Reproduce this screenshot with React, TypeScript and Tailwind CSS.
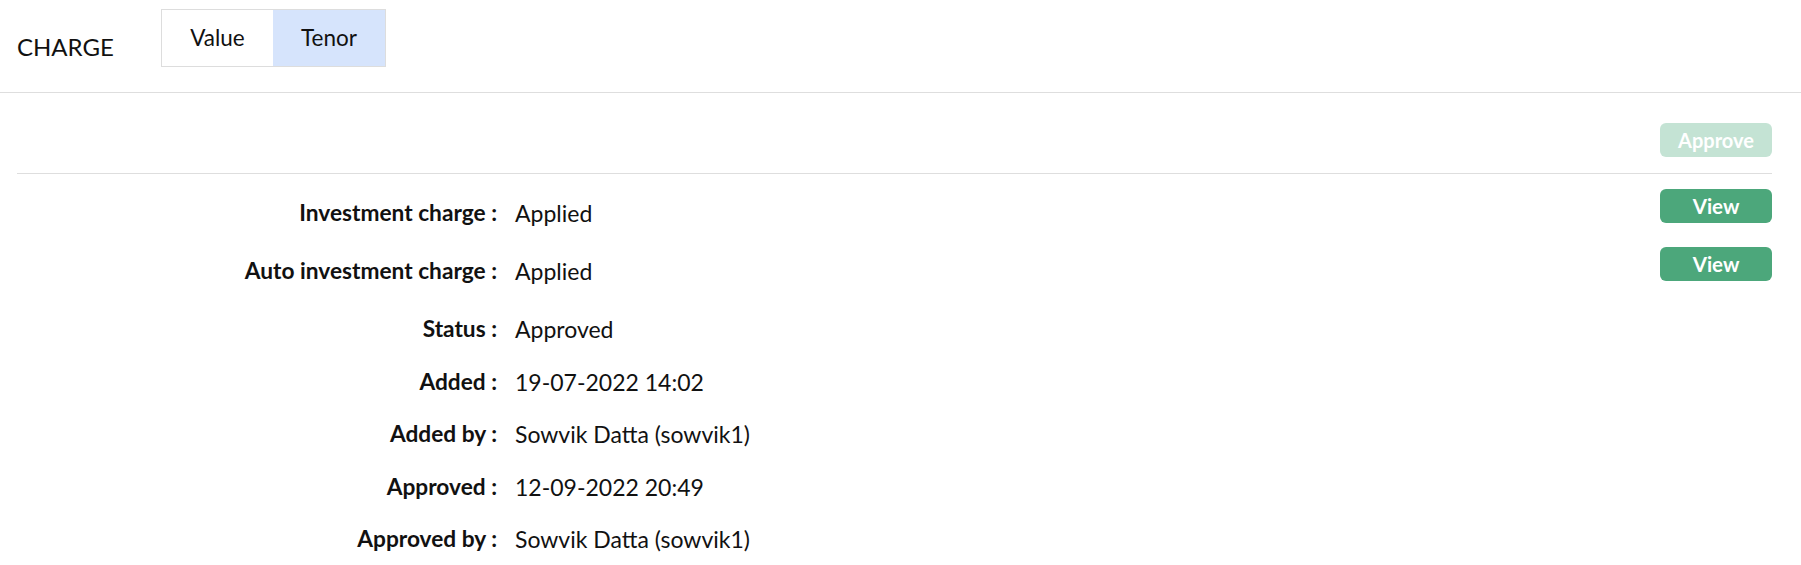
import React from "react";

const rows: { label: string; value: string; button?: boolean }[] = [
  { label: "Investment charge :", value: "Applied", button: true },
  { label: "Auto investment charge :", value: "Applied", button: true },
  { label: "Status :", value: "Approved" },
  { label: "Added :", value: "19-07-2022 14:02" },
  { label: "Added by :", value: "Sowvik Datta (sowvik1)" },
  { label: "Approved :", value: "12-09-2022 20:49" },
  { label: "Approved by :", value: "Sowvik Datta (sowvik1)" },
];

export default function App() {
  return (
    <div
      className="w-[1801px] h-[565px] overflow-hidden bg-white text-[#111]"
      style={{ fontFamily: "Lato, 'Noto Sans', sans-serif" }}
    >
      <div className="flex items-start h-[93px] border-b border-[#dedede] pl-[17px] pt-[9px]">
        <div className="w-[144px] pt-[23px] text-[24px] leading-[30px] text-[#111]">CHARGE</div>
        <div className="flex border border-[#dddddd] h-[58px]">
          <div className="w-[111px] flex items-center justify-center text-[22.5px] bg-white">Value</div>
          <div className="w-[112px] flex items-center justify-center text-[22.5px] bg-[#d6e4fc]">Tenor</div>
        </div>
      </div>
      <div className="ml-[17px] mr-[29px]">
        <div className="flex justify-end pt-[30px] pb-[16px] border-b border-[#dedede]">
          <button className="w-[112px] h-[34px] rounded-[6px] bg-[#c4e3d4] text-white font-bold text-[20px] leading-none">
            Approve
          </button>
        </div>
        {rows.map((r, i) => (
          <div key={i} className={`flex items-start ${r.button ? "h-[58px]" : "h-[52.5px]"}`}>
            <div className="w-[480px] text-right font-bold text-[22.7px] leading-[24px] pt-[27px] text-[#111]">
              {r.label}
            </div>
            <div className="flex-1 pl-[18px] text-[23px] leading-[24px] pt-[27px] text-[#111]">{r.value}</div>
            {r.button && (
              <button className="mt-[15px] w-[112px] h-[34px] rounded-[6px] bg-[#4ca77b] text-white font-bold text-[20.5px] leading-none">
                View
              </button>
            )}
          </div>
        ))}
      </div>
    </div>
  );
}
